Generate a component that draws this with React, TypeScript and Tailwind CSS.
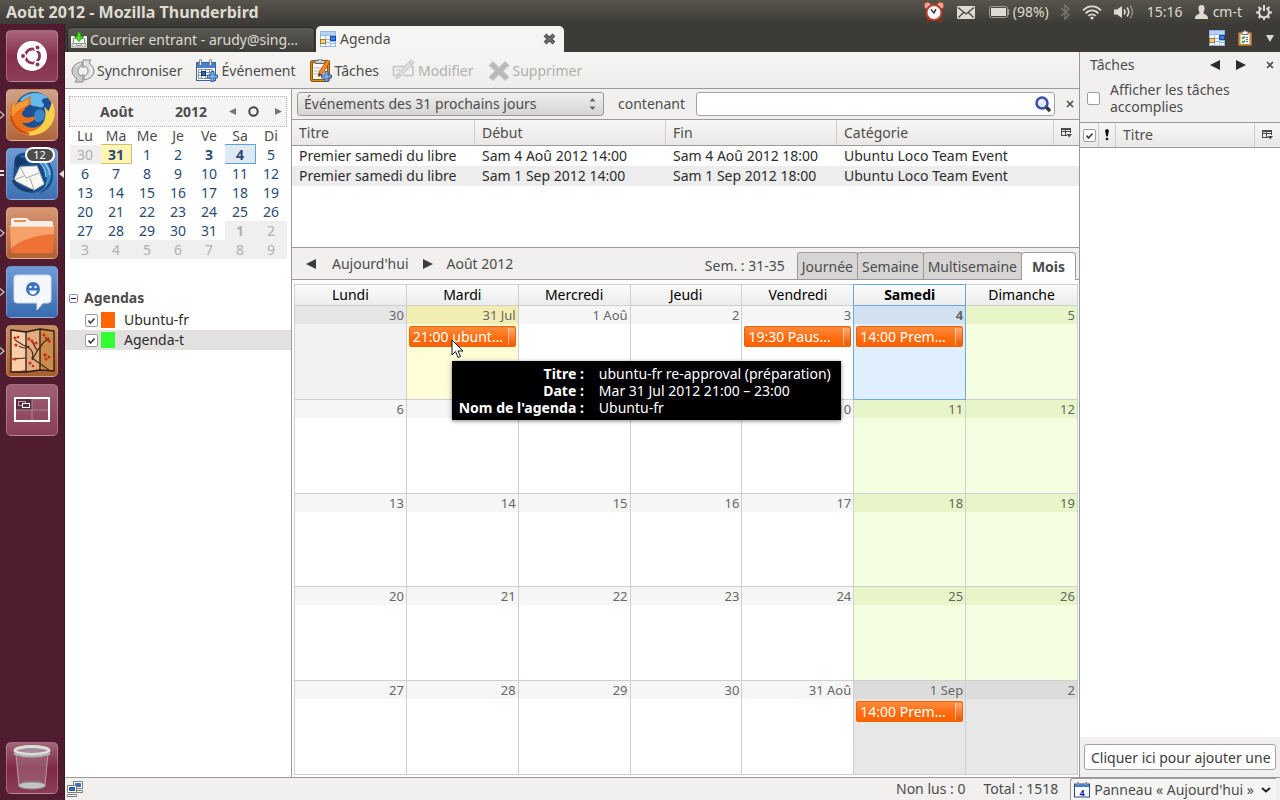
import type { ReactNode } from 'react';
import { clsx } from 'clsx';

interface CalendarEvent {
  label: string;
}

interface DayCell {
  label: string;
  tone?: 'off' | 'selected' | 'today' | 'weekend' | 'offWeekend';
  event?: CalendarEvent;
  tooltip?: boolean;
}

const dayNames = ['Lundi', 'Mardi', 'Mercredi', 'Jeudi', 'Vendredi', 'Samedi', 'Dimanche'];

const weeks: DayCell[][] = [
  [
    { label: '30', tone: 'off' },
    { label: '31 Jul', tone: 'selected', event: { label: '21:00 ubunt…' }, tooltip: true },
    { label: '1 Aoû' },
    { label: '2' },
    { label: '3', event: { label: '19:30 Paus…' } },
    { label: '4', tone: 'today', event: { label: '14:00 Prem…' } },
    { label: '5', tone: 'weekend' },
  ],
  [
    { label: '6' },
    { label: '7' },
    { label: '8' },
    { label: '9' },
    { label: '10' },
    { label: '11', tone: 'weekend' },
    { label: '12', tone: 'weekend' },
  ],
  [
    { label: '13' },
    { label: '14' },
    { label: '15' },
    { label: '16' },
    { label: '17' },
    { label: '18', tone: 'weekend' },
    { label: '19', tone: 'weekend' },
  ],
  [
    { label: '20' },
    { label: '21' },
    { label: '22' },
    { label: '23' },
    { label: '24' },
    { label: '25', tone: 'weekend' },
    { label: '26', tone: 'weekend' },
  ],
  [
    { label: '27' },
    { label: '28' },
    { label: '29' },
    { label: '30' },
    { label: '31 Aoû' },
    { label: '1 Sep', tone: 'offWeekend', event: { label: '14:00 Prem…' } },
    { label: '2', tone: 'offWeekend' },
  ],
];

const headTone = {
  normal: 'bg-[#f6f6f6]',
  off: 'bg-[#e6e6e6]',
  selected: 'bg-[#f2edb2]',
  today: 'bg-[#d1e1f2] font-bold',
  weekend: 'bg-[#e8f5c9]',
  offWeekend: 'bg-[#dcdcdc]',
};

const bodyTone = {
  normal: 'bg-white',
  off: 'bg-[#f2f2f2]',
  selected: 'bg-[#fffcd8]',
  today: 'bg-[#e0effd]',
  weekend: 'bg-[#f4fee0]',
  offWeekend: 'bg-[#e7e7e7]',
};

const miniWeeks = [
  [30, 31, 1, 2, 3, 4, 5],
  [6, 7, 8, 9, 10, 11, 12],
  [13, 14, 15, 16, 17, 18, 19],
  [20, 21, 22, 23, 24, 25, 26],
  [27, 28, 29, 30, 31, 1, 2],
  [3, 4, 5, 6, 7, 8, 9],
];

const agendaRows = [
  ['Premier samedi du libre', 'Sam 4 Aoû 2012 14:00', 'Sam 4 Aoû 2012 18:00', 'Ubuntu Loco Team Event'],
  ['Premier samedi du libre', 'Sam 1 Sep 2012 14:00', 'Sam 1 Sep 2012 18:00', 'Ubuntu Loco Team Event'],
];

/* ---------- icons ---------- */

function Triangle({ dir, size = 10, color = '#3c3c3c' }: { dir: 'left' | 'right' | 'down'; size?: number; color?: string }) {
  const d = { left: 'M10 0v10L0 5z', right: 'M0 0v10l10-5z', down: 'M1 2h8L5 9z' }[dir];
  return (
    <svg width={size} height={size} viewBox="0 0 10 10">
      <path d={d} fill={color} />
    </svg>
  );
}

function CloseIcon() {
  return (
    <svg width="8" height="8" viewBox="0 0 8 8">
      <path d="M1 1l6 6M7 1L1 7" stroke="#4c4c4c" strokeWidth="1.600" />
    </svg>
  );
}

function ColumnPicker() {
  return (
    <svg width="11" height="10" viewBox="0 0 11 10">
      <path d="M0 0h10v5H9V4H5v3h1v1H0zM1 2v1h3V2zM5 2v1h4V2zM1 4v3h3V4z" fill="#4c4c4c" fillRule="evenodd" />
      <path d="M5.500 6h5.500L8.200 9.500z" fill="#4c4c4c" />
    </svg>
  );
}

function CalendarTabIcon() {
  return (
    <svg width="16" height="16" viewBox="0 0 16 16">
      <rect width="16" height="16" fill="#8fb4e6" />
      <path d="M1 1h14v3H1z" fill="#b9d3f5" />
      <path d="M1 5h4v3H1zM6 5h4v3H6zM11 5h4v3h-4zM6 9h4v2H6zM11 11h4v1h-4zM1 13h4v2H1zM6 12h4v3H6zM11 13h4v2h-4z" fill="#f4f8ff" />
      <path d="M5.500 1v14M10.500 1v14" stroke="#a9c6ee" />
      <rect x="10.500" y="5.500" width="5" height="4" fill="#3b7ae0" stroke="#174a9f" />
      <rect x="0.500" y="8.500" width="5" height="4" fill="#f3cf78" stroke="#a77b24" />
    </svg>
  );
}

function TaskTabIcon() {
  return (
    <svg width="14" height="16" viewBox="0 0 14 16">
      <rect x=".5" y="2.500" width="13" height="13" rx="1" fill="#c98d45" stroke="#a06c30" />
      <path d="M2.500 4h9v10h-9z" fill="#f4f8f8" />
      <path d="M4 1.500h2a1 1 0 0 1 2 0h2v3H4z" fill="#eee" stroke="#777" />
      <path d="M4 7.500l1 1 2-2M4 11.500l1 1 2-2" stroke="#2c9a3a" fill="none" strokeWidth="1.300" />
      <path d="M8 7.500h2M8 9.500h2M8 11.500h2" stroke="#666" />
    </svg>
  );
}

function InboxIcon() {
  return (
    <svg width="16" height="16" viewBox="0 0 16 16">
      <path d="M.5 4.500h15v11H.5z" fill="#e9e9e4" stroke="#fafaf5" />
      <path d="M2.500 6.500h11v5h-11z" fill="#fff" stroke="#8f8f8a" />
      <path d="M1 11.500h4l1 2h4l1-2h4V15H1z" fill="#deded8" stroke="#9a9a94" />
      <path d="M6.500.5h3v4h3L8 9.500 3.500 4.500h3z" fill="#54d82e" stroke="#219a16" />
    </svg>
  );
}

function SyncIcon() {
  return (
    <svg width="24" height="24" viewBox="0 0 24 24">
      <path d="M11 3v4c-3 1-4 3-4 5s1 4 3 5l2-2v8H4l2-3C3 18 1 15 1 12c0-5 5-8.500 10-9z" fill="#c9cccd" stroke="#85898b" />
      <path d="M13 21v-4c3-1 4-3 4-5s-1-4-3-5l-2 2V1h8l-2 3c3 2 5 5 5 8 0 5-5 8.500-10 9z" fill="#e1e3e3" stroke="#85898b" />
      <path d="M5 8c1-2 3-3 5-4M20 9c2 4-1 8-5 10" stroke="#fff" fill="none" opacity=".8" />
    </svg>
  );
}

function PlusBadge({ x, y }: { x: number; y: number }) {
  return (
    <path
      d="M4 .5h3V4h3.500v3H7v3.500H4V7H.5V4H4z"
      transform={`translate(${x} ${y})`}
      fill="#7fa9de"
      stroke="#2c5f9f"
    />
  );
}

function NewEventIcon() {
  return (
    <svg width="24" height="24" viewBox="0 0 24 24">
      <rect x="1.500" y="3.500" width="19" height="18" fill="#fff" stroke="#3465a4" />
      <path d="M2 4h18v5H2z" fill="#4a80c9" />
      <path d="M3.500 10.500h14v9h-14zM3.500 13.500h14M3.500 16.500h14M6.500 10.500v9M10.500 10.500v9M14.500 10.500v9" fill="none" stroke="#8a93a0" />
      <rect x="6.500" y="12.500" width="4" height="4" fill="#2f66b3" stroke="#153a73" />
      <path d="M5.500 1.500v4M15.500 1.500v4" stroke="#888" strokeWidth="3" strokeLinecap="round" />
      <path d="M5.500 1.500v4M15.500 1.500v4" stroke="#eee" strokeWidth="1" strokeLinecap="round" />
      <PlusBadge x={12} y={12} />
    </svg>
  );
}

function NewTaskIcon() {
  return (
    <svg width="24" height="24" viewBox="0 0 24 24">
      <rect x="2.500" y="2.500" width="17" height="19" rx="1.500" fill="#f7f7f5" stroke="#8f5902" strokeWidth="3" />
      <rect x="2.500" y="2.500" width="17" height="19" rx="1.500" fill="none" stroke="#d98b1f" />
      <path d="M6 4.500h10v-3h-3a2 2 0 0 0-4 0H6z" fill="#ccc" stroke="#666" />
      <path d="M5 9h8M5 12h6M5 15h4" stroke="#bbb" />
      <path d="M18 1l3 1.500-8 13-3.500 2 .5-4z" fill="#f28a2c" stroke="#b8560b" />
      <path d="M10 14l2.500 1.500L9.500 17.500z" fill="#444" />
      <PlusBadge x={12} y={12} />
    </svg>
  );
}

function EditIcon() {
  return (
    <svg width="24" height="24" viewBox="0 0 24 24" fill="none" stroke="#c4c4c2">
      <path d="M1.500 7.500h14M1.500 7.500v9h3M12 16.500h9v-9h-2" strokeWidth="1.500" />
      <path d="M19 1l3 2.500L9 17l-5 3 1.500-5z" fill="#dededc" />
      <path d="M5.500 15L9 17M17 3.500L20 6" />
      <path d="M4 12l3-2 1 2" />
    </svg>
  );
}

function DeleteIcon() {
  return (
    <svg width="24" height="22" viewBox="0 0 24 22">
      <path d="M6 1.500l6 6 6-6 4 4-6 5.500 6 6-4 3.500-6-6-6 6L2 17l6-6-6-5.500z" fill="#b9b9b7" stroke="#c9c9c7" />
    </svg>
  );
}

function SearchIcon() {
  return (
    <svg width="16" height="16" viewBox="0 0 16 16">
      <path d="M10.500 10.500l3.500 3.500" stroke="#333" strokeWidth="3.500" strokeLinecap="round" />
      <circle cx="7" cy="7" r="5.500" fill="#dfe7fb" stroke="#3a4fa3" strokeWidth="2.500" />
      <path d="M4.500 6.500A3 3 0 0 1 7 4.500" stroke="#fff" strokeWidth="1.500" fill="none" />
    </svg>
  );
}

function NetworkIcon() {
  return (
    <svg width="16" height="16" viewBox="0 0 16 16" stroke="#7d7f7a">
      <path d="M6.500.5h9v7h-9zM7.500 9.500h8v2h-8z" fill="#fff" />
      <path d="M8.500 2.500h5v3h-5z" fill="#3f6fc4" stroke="#3a69b8" />
      <path d="M.5 4.500h9v7h-9zM.5 13.500h9v2h-9z" fill="#fff" />
      <path d="M2.500 6.500h5v3h-5z" fill="#3f6fc4" stroke="#1f4b99" />
    </svg>
  );
}

/* ---------- top panel ---------- */

function AlarmIcon() {
  return (
    <svg width="22" height="22" viewBox="0 0 22 22">
      <path d="M6 17l-1 3M16 17l1 3" stroke="#8e2b1c" strokeWidth="3" strokeLinecap="round" />
      <circle cx="4.500" cy="4.500" r="3.500" fill="#e9a597" stroke="#a5402f" />
      <circle cx="17.500" cy="4.500" r="3.500" fill="#e9a597" stroke="#a5402f" />
      <circle cx="11" cy="11.500" r="7.500" fill="#fbfbfb" stroke="#b8412e" strokeWidth="2" />
      <path d="M8 8.500l3 3.500 2-4" stroke="#333" strokeWidth="1.500" fill="none" />
    </svg>
  );
}

function TopPanel() {
  return (
    <header className="h-6 shrink-0 flex items-center justify-between pl-[6px] pr-2 bg-linear-to-b from-[#57554b] to-[#3d3b37] text-[#dfdbd2]">
      <h1 className="text-base leading-6 font-bold">Août 2012 - Mozilla Thunderbird</h1>
      <div className="flex items-center text-sm leading-6">
        <AlarmIcon />
        <svg width="18" height="13" viewBox="0 0 18 13" className="ml-3">
          <rect width="18" height="13" rx="1" fill="#dfdbd2" />
          <path d="M1 1.500l8 6.500 8-6.500M1.500 11.500l5-5M16.500 11.500l-5-5" stroke="#45433d" strokeWidth="1.300" fill="none" />
        </svg>
        <svg width="21" height="12" viewBox="0 0 21 12" className="ml-[14px]">
          <rect x=".5" y=".5" width="18" height="11" rx="2" fill="none" stroke="#a09d95" />
          <rect x="2" y="2" width="15" height="8" fill="#dfdbd2" />
          <path d="M19.500 3v6" stroke="#a09d95" strokeWidth="1.500" />
        </svg>
        <span className="ml-[3px]">(98%)</span>
        <svg width="10" height="16" viewBox="0 0 10 16" className="ml-[11px]" fill="none" stroke="#7b7972" strokeWidth="1.300">
          <path d="M1 4l8 7-4 4V1l4 4-8 7" />
        </svg>
        <svg width="20" height="15" viewBox="0 0 20 15" className="ml-3" fill="none" stroke="#dfdbd2" strokeWidth="1.800">
          <path d="M1 5.500C6 0 14 0 19 5.500M3.700 8.300c3.600-4 9-4 12.600 0M6.400 11c2-2.300 5.200-2.300 7.200 0" />
          <path d="M8 12.500c1-1 3-1 4 0L10 15z" fill="#dfdbd2" stroke="none" />
        </svg>
        <svg width="20" height="14" viewBox="0 0 20 14" className="ml-3" fill="none" stroke="#dfdbd2" strokeWidth="1.600">
          <path d="M0 4.500h3L8 1v12L3 9.500H0z" fill="#dfdbd2" stroke="none" />
          <path d="M10 4.500q2 2.500 0 5M13 2.500q3.500 4.500 0 9" />
          <path d="M16 .8q5 6.200 0 12.400" stroke="#8a8880" />
        </svg>
        <span className="ml-[13px]">15:16</span>
        <svg width="13" height="14" viewBox="0 0 13 14" className="ml-3">
          <path d="M6.500 0C9 0 10 2 9.500 4.500 9.300 6 8.500 7 8.500 8c0 1.500 4.500 1.500 4.500 5v1H0v-1c0-3.500 4.500-3.500 4.500-5 0-1-.8-2-1-3.500C3 2 4 0 6.500 0z" fill="#dfdbd2" />
        </svg>
        <span className="ml-[5px]">cm-t</span>
        <svg width="16" height="16" viewBox="0 0 16 16" className="ml-[14px]" fill="none" stroke="#dfdbd2" strokeWidth="2">
          <path d="M5.500 4.200A5 5 0 1 0 10.500 4.200" />
          <path d="M8 1v6" />
          <path d="M2.500 3l2 2M0 8.500h3M2.500 14l2-2M8 13v3M13.500 14l-2-2M16 8.500h-3M13.500 3l-2 2" />
        </svg>
      </div>
    </header>
  );
}

/* ---------- launcher ---------- */

function LauncherTile({ label, tint, arrow, focused, children }: {
  label: string;
  tint: string;
  arrow?: boolean;
  focused?: boolean;
  children: ReactNode;
}) {
  return (
    <div className="relative">
      {arrow && (
        <svg width="5" height="8" viewBox="0 0 5 8" className="absolute -left-[6px] top-[22px]">
          <path d="M0 .5L4 4 0 7.500" fill="none" stroke="#cfc3c9" strokeWidth="1.300" />
        </svg>
      )}
      {focused && (
        <>
          <svg width="5" height="7" viewBox="0 0 5 7" className="absolute -left-[6px] top-[22px]">
            <path d="M0 1h4M0 5h4" stroke="#e5dde1" strokeWidth="2" />
          </svg>
          <svg width="5" height="8" viewBox="0 0 5 8" className="absolute -right-[6px] top-[22px]">
            <path d="M5 0v8L0 4z" fill="#e5dde1" />
          </svg>
        </>
      )}
      <button
        type="button"
        aria-label={label}
        className={clsx('block w-[52px] h-[52px] rounded-[5px] border border-white/25 overflow-hidden bg-linear-to-b', tint)}
      >
        {children}
      </button>
    </div>
  );
}

function Launcher() {
  return (
    <nav className="w-[65px] shrink-0 flex flex-col items-center gap-[7px] py-[6px] pr-px bg-[#4f1c30] border-r border-[#3a1424]">
      <LauncherTile label="Tableau de bord" tint="from-[#a8657c] via-[#84304c] to-[#8c3d58]">
        <svg viewBox="0 0 50 50">
          <circle cx="25" cy="25" r="15" fill="#fff" />
          <circle cx="25.500" cy="25" r="7" fill="none" stroke="#8a3a55" strokeWidth="3" />
          <g stroke="#fff" strokeWidth="1.600">
            <path d="M25.500 25H14M25.500 25l6-10M25.500 25l6 10" strokeWidth="1.500" />
            <circle cx="16" cy="25" r="2.800" fill="#8a3a55" />
            <circle cx="30.500" cy="16.500" r="2.800" fill="#8a3a55" />
            <circle cx="30.500" cy="33.500" r="2.800" fill="#8a3a55" />
          </g>
          <circle cx="25.500" cy="25" r="5.500" fill="#fff" />
        </svg>
      </LauncherTile>
      <LauncherTile label="Firefox" tint="from-[#cfa287] to-[#b0643a]" arrow>
        <svg viewBox="0 0 50 50">
          <circle cx="27" cy="21" r="19" fill="#1c4f94" />
          <path d="M13 10C19 2 34 0 41 8c-5 0-8 2-5 5 3 2-1 6-4 4-3-1-7 0-9-3-2-2-6-1-10-4z" fill="#64b8ea" />
          <path d="M30 20c4-2 8 1 8 5s-4 8-8 7-4-9 0-12z" fill="#3a86c9" />
          <path d="M45 12c6 14-1 30-17 33C14 47 3 38 3 24c0-5 1-9 3-13l2 5c2-4 5-5 8-5 2-1 5-4 8-5-1 3-1 5 0 8l-6 4c0 3-3 3-3 6 1 4 6 4 9 3 4-1 6 1 3 3-5 4-9 3-12 3 5 6 14 6 20 1 5-4 6-9 5-14 2 1 3 3 3 5 1-4 2-9 2-13z" fill="#ea701a" />
          <path d="M45 12c7 14 0 30-17 33-6 1-10 0-14-3 11 1 20-3 23-11 2-5 2-9 0-14 2 1 4 3 4 5 2-3 3-7 4-10z" fill="#fad04a" />
          <path d="M6 12l2 5c2-4 5-5 8-5 2-1 4-3 6-4-1 3 0 5 0 6l-6 4c-4 1-8 4-10 9-2-5-1-10 0-15z" fill="#f39a3c" />
          <path d="M4 26c1 9 8 16 18 18" stroke="#c94812" strokeWidth="2" fill="none" />
        </svg>
      </LauncherTile>
      <div className="relative">
        <LauncherTile label="Thunderbird" tint="from-[#6f9ad2] to-[#3d70b4]" focused>
          <svg viewBox="0 0 50 50">
            <path d="M9 7c6-5 14-4 19 0 9 0 17 6 18 17 1 10-5 19-14 20 3-2 5-4 6-7-4 6-11 8-17 6C12 42 6 37 6 29c1-4 0-7 1-11 0-4 0-7 2-11z" fill="#1b4c87" />
            <path d="M12 9c8-5 17-2 22 4 7 8 8 18 2 28 7-6 10-14 7-22C40 11 31 6 21 7z" fill="#3f93cf" />
            <path d="M22 9c10 1 17 9 17 19M30 9c7 2 12 9 13 17" stroke="#8cc9ee" strokeWidth="1.500" fill="none" />
            <path d="M13 18l17-1 7 18-10 6L7 31z" fill="#f7f7f3" stroke="#c9c9c4" />
            <path d="M13 18l6 11 13-5M7 31l10-4M27 41l-4-12" fill="none" stroke="#a9a9a4" />
            <path d="M9 8c5-1 9 2 11 7-4-1-7 1-10 4-2-4-3-7-1-11z" fill="#123a6d" />
            <path d="M6 31c4 8 11 11 20 11" stroke="#1b3f70" strokeWidth="3" fill="none" />
          </svg>
        </LauncherTile>
        <span className="absolute -top-px left-[19px] w-[30px] h-[16px] rounded-full border-2 border-white bg-[#4d4d4d] text-white text-[11px] leading-3 text-center">
          12
        </span>
      </div>
      <LauncherTile label="Dossier personnel" tint="from-[#d79673] to-[#b4602f]" arrow>
        <svg viewBox="0 0 50 50">
          <path d="M4 12q0-2 2-2h14l3 3h21q2 0 2 2v5H4z" fill="#f5efe9" />
          <path d="M7 12h12v2H7z" fill="#ef8b4c" />
          <path d="M3 18h44l-1 24q0 3-3 3H7q-3 0-3-3z" fill="#ee7236" />
          <path d="M3 18h44v8C28 27 14 32 4 40z" fill="#f6a16a" />
          <path d="M3 18.500h44" stroke="#fcd5b8" />
        </svg>
      </LauncherTile>
      <LauncherTile label="Messagerie" tint="from-[#6f9ad6] to-[#386bb0]" arrow>
        <svg viewBox="0 0 50 50">
          <path d="M10 8h31q3 0 3 3v22q0 3-3 3h-5l-6 7v-7H10q-3 0-3-3V11q0-3 3-3z" fill="#f4f7fb" stroke="#cdd9ea" />
          <circle cx="26" cy="22" r="7" fill="#3b73c0" />
          <circle cx="23.500" cy="20" r="1.200" fill="#fff" />
          <circle cx="28.500" cy="20" r="1.200" fill="#fff" />
          <path d="M22 23.500h8q-1 4-4 4t-4-4z" fill="#fff" />
        </svg>
      </LauncherTile>
      <LauncherTile label="Paravent" tint="from-[#c98a62] to-[#a95e2c]" arrow>
        <svg viewBox="0 0 50 50">
          <path d="M4 4l15 2v38L4 46z" fill="#fbcda6" />
          <path d="M19 6l14-3v41l-14 2z" fill="#e2ab80" />
          <path d="M33 3l14 2v40l-14-1z" fill="#c98d4c" />
          <path d="M4 4l15 2 14-3 14 2v40l-14-1-14 2-15 0zM19 6v40M33 3v41" fill="none" stroke="#2a1a10" strokeWidth="1.300" />
          <path d="M5 33l14-1M42 44L25 32q3-6-4-11l-5-2-8-5M25 34q5-10 12-18l5-4M22 20q-4 4-10 0M30 24q-4-6-5-10" fill="none" stroke="#4a2a1c" strokeWidth="1.200" />
          <g fill="#cf2b20">
            <circle cx="8" cy="12" r="1.600" /><circle cx="11" cy="11" r="1.300" /><circle cx="9" cy="19" r="1.600" />
            <circle cx="22" cy="13" r="1.600" /><circle cx="25" cy="15" r="1.500" /><circle cx="29" cy="17" r="1.600" />
            <circle cx="37" cy="9" r="1.600" /><circle cx="42" cy="15" r="1.800" /><circle cx="39" cy="12" r="1.300" />
            <circle cx="38" cy="29" r="1.800" /><circle cx="42" cy="31" r="1.600" /><circle cx="39" cy="33" r="1.500" />
            <circle cx="23" cy="37" r="1.500" /><circle cx="26" cy="40" r="1.300" /><circle cx="8" cy="33" r="1.600" />
          </g>
        </svg>
      </LauncherTile>
      <LauncherTile label="Espaces de travail" tint="from-[#9f6076] to-[#8a3d57]">
        <svg viewBox="0 0 50 50" fill="none">
          <path d="M8 13h17v12H8z" fill="#5f2a3f" />
          <path d="M25 12v24M8 25h34" stroke="#98918c" />
          <rect x="8" y="13" width="34" height="23" stroke="#fff" strokeWidth="2" />
          <rect x="11.500" y="16.500" width="7" height="4" stroke="#aaa" />
          <rect x="15.500" y="18.500" width="7" height="4" fill="#5f2a3f" stroke="#fff" />
        </svg>
      </LauncherTile>
      <div className="mt-auto">
        <LauncherTile label="Corbeille" tint="from-[#a3637a] via-[#7d2745] to-[#8c3d58]">
          <svg viewBox="0 0 50 50">
            <path d="M8 8h34l-4 34q-13 7-27 0z" fill="#a8798a" opacity=".5" />
            <path d="M9 10l3 32M41 10l-3 32" stroke="#b993a0" />
            <ellipse cx="25" cy="42.500" rx="13.500" ry="3.500" fill="#c4c4c2" stroke="#909090" />
            <ellipse cx="25" cy="7.500" rx="17" ry="4" fill="#a3899a" stroke="#deded9" strokeWidth="3" />
            <path d="M8 9v2q17 5 34 0V9" stroke="#b4b4b0" strokeWidth="2" fill="none" />
          </svg>
        </LauncherTile>
      </div>
    </nav>
  );
}

/* ---------- thunderbird window ---------- */

function TabStrip() {
  return (
    <div className="h-7 shrink-0 flex items-end justify-between bg-[#3c3b37] pr-[5px]">
      <div className="flex items-end gap-px pl-[2px]">
        <button type="button" className="flex items-center gap-[3px] w-[248px] h-[25px] px-[3px] rounded-t-[5px] border border-b-0 border-[#2b2a27] bg-linear-to-b from-[#5a5953] to-[#403f3b] text-[#dfdbd2] whitespace-nowrap">
          <InboxIcon />
          Courrier entrant - arudy@sing…
        </button>
        <div className="flex items-center w-[248px] h-[26px] pl-1 pr-2 rounded-t-[5px] bg-[#f6f5f4]">
          <button type="button" className="flex items-center gap-1 flex-1">
            <CalendarTabIcon />
            Agenda
          </button>
          <button type="button" aria-label="Fermer l'onglet">
            <svg width="13" height="12" viewBox="0 0 13 12">
              <path d="M2 2l9 8M11 2l-9 8" stroke="#4c4c4c" strokeWidth="4" />
              <path d="M2 2l9 8M11 2l-9 8" stroke="#77777a" strokeWidth="1.500" />
            </svg>
          </button>
        </div>
      </div>
      <div className="flex items-center gap-[13px] h-7">
        <button type="button" aria-label="Agenda"><CalendarTabIcon /></button>
        <button type="button" aria-label="Tâches"><TaskTabIcon /></button>
        <button type="button" aria-label="Lister les onglets"><Triangle dir="down" color="#dfdbd2" /></button>
      </div>
    </div>
  );
}

function ToolButton({ icon, disabled, children }: { icon: ReactNode; disabled?: boolean; children: ReactNode }) {
  return (
    <button type="button" disabled={disabled} className={clsx('flex items-center gap-[2px]', disabled && 'text-[#b0afad]')}>
      {icon}
      {children}
    </button>
  );
}

function Toolbar() {
  return (
    <div className="h-[37px] shrink-0 flex items-center gap-[13px] pl-[6px] pt-px border-b border-[#9c9a98] bg-linear-to-b from-[#f6f5f4] to-[#efedec]">
      <ToolButton icon={<SyncIcon />}>Synchroniser</ToolButton>
      <ToolButton icon={<NewEventIcon />}>Événement</ToolButton>
      <ToolButton icon={<NewTaskIcon />}>Tâches</ToolButton>
      <ToolButton icon={<EditIcon />} disabled>Modifier</ToolButton>
      <ToolButton icon={<DeleteIcon />} disabled>Supprimer</ToolButton>
    </div>
  );
}

function MiniMonth() {
  return (
    <div className="mx-1 mt-[7px]">
      <div className="flex items-center h-[31px] border border-dotted border-[#b0b0b0] bg-[#f4f4f4] font-bold pr-1">
        <span className="flex-1 pl-[30px]">Août</span>
        <span className="w-[54px]">2012</span>
        <button type="button" aria-label="Mois précédent" className="pr-3"><Triangle dir="left" size={7} color="#777" /></button>
        <button type="button" aria-label="Aujourd'hui" className="pr-4">
          <svg width="11" height="11" viewBox="0 0 11 11"><circle cx="5.500" cy="5.500" r="4.200" fill="none" stroke="#444" strokeWidth="2" /></svg>
        </button>
        <button type="button" aria-label="Mois suivant"><Triangle dir="right" size={7} color="#777" /></button>
      </div>
      <table className="w-full table-fixed text-center leading-[17px]">
        <thead>
          <tr>
            {['Lu', 'Ma', 'Me', 'Je', 'Ve', 'Sa', 'Di'].map((d) => (
              <th key={d} className="font-normal p-0 h-4">{d}</th>
            ))}
          </tr>
        </thead>
        <tbody className="text-[#2a4a75]">
          {miniWeeks.map((week, w) => (
            <tr key={w}>
              {week.map((day, d) => {
                const outside = (w === 0 && d === 0) || (w === 4 && d > 4) || w === 5;
                return (
                  <td
                    key={d}
                    className={clsx(
                      'h-[19px] p-0 border',
                      outside && 'bg-[#efefef] text-[#b0b0b0]',
                      w === 0 && d === 1 && 'border-[#d5be6c] bg-[#fdf5b4]',
                      w === 0 && d === 5 && 'border-[#5fa4d8] bg-[#dfe9f4]',
                      !(w === 0 && (d === 1 || d === 5)) && 'border-transparent',
                      ((w === 0 && (d === 1 || d === 4 || d === 5)) || (w === 4 && d === 5)) && 'font-bold'
                    )}
                  >
                    {day}
                  </td>
                );
              })}
            </tr>
          ))}
        </tbody>
      </table>
    </div>
  );
}

function CheckBox({ id, checked }: { id: string; checked?: boolean }) {
  return (
    <span className="relative flex w-[13px] h-[13px] shrink-0">
      <input
        id={id}
        type="checkbox"
        defaultChecked={checked}
        className="peer appearance-none w-[13px] h-[13px] rounded-[2px] border border-[#9f9d9b] bg-white"
      />
      <svg viewBox="0 0 13 13" className="absolute inset-0 hidden peer-checked:block pointer-events-none">
        <path d="M3.500 6.500l2 2.500 4-4.500" fill="none" stroke="#3c3c3c" strokeWidth="1.600" />
      </svg>
    </span>
  );
}

function Sidebar() {
  return (
    <aside className="w-[227px] shrink-0 border-r border-[#9c9a98] bg-white">
      <MiniMonth />
      <div className="mt-[27px]">
        <div className="flex items-center gap-[6px] h-6 pl-1 font-bold">
          <button type="button" aria-label="Réduire">
            <svg width="9" height="9" viewBox="0 0 9 9">
              <rect x=".5" y=".5" width="8" height="8" rx="1" fill="#fafaff" stroke="#8585c9" />
              <path d="M2 4.500h5" stroke="#222" />
            </svg>
          </button>
          Agendas
        </div>
        <div className="flex items-center h-5 pl-5 gap-[3px] text-[#2c2c2c]">
          <CheckBox id="cal-ubuntu" checked />
          <span className="w-[14px] h-4 bg-[#ff6600]" />
          <label htmlFor="cal-ubuntu" className="pl-[6px]">Ubuntu-fr</label>
        </div>
        <div className="flex items-center h-5 pl-5 gap-[3px] bg-[#e3e1df] text-[#2c2c2c]">
          <CheckBox id="cal-agenda" checked />
          <span className="w-[14px] h-4 bg-[#33ff33]" />
          <label htmlFor="cal-agenda" className="pl-[6px]">Agenda-t</label>
        </div>
      </div>
    </aside>
  );
}

function FilterBar() {
  return (
    <div className="h-[30px] shrink-0 flex items-center pl-[5px] pr-[5px] bg-[#f1f0ef]">
      <div className="relative w-[307px] h-6">
        <select
          aria-label="Période"
          className="appearance-none w-full h-6 pl-[6px] rounded-[3px] border border-[#9b9997] bg-linear-to-b from-[#f0efee] to-[#d6d5d3]"
        >
          <option>Événements des 31 prochains jours</option>
        </select>
        <svg width="7" height="12" viewBox="0 0 7 12" className="absolute right-2 top-[6px] pointer-events-none">
          <path d="M.5 3.500h6L3.500 0zM.5 8.500h6l-3 3.500z" fill="#666" />
        </svg>
      </div>
      <label htmlFor="search" className="ml-[14px]">contenant</label>
      <div className="relative flex-1 ml-[11px] h-6">
        <input id="search" type="text" className="w-full h-6 px-2 pr-7 rounded-[3px] border border-[#a5a3a1] bg-white" />
        <span className="absolute right-1 top-1"><SearchIcon /></span>
      </div>
      <button type="button" aria-label="Fermer" className="ml-[11px]"><CloseIcon /></button>
    </div>
  );
}

function AgendaList() {
  const th = 'h-[26px] p-0 pl-[7px] text-left font-normal border-r border-[#cfcdcb]';
  return (
    <div className="h-[128px] shrink-0 border-t border-[#9c9a98] bg-white">
      <table className="w-full table-fixed border-separate border-spacing-0">
        <thead className="bg-linear-to-b from-[#f8f7f7] to-[#e9e8e6]">
          <tr className="*:border-b *:border-b-[#9c9a98]">
            <th className={clsx(th, 'w-[183px]')}>Titre</th>
            <th className={clsx(th, 'w-[191px]')}>Début</th>
            <th className={clsx(th, 'w-[171px]')}>Fin</th>
            <th className={th}>Catégorie</th>
            <th className="w-[25px] p-0">
              <button type="button" aria-label="Colonnes" className="flex mx-auto"><ColumnPicker /></button>
            </th>
          </tr>
        </thead>
        <tbody className="text-[#2c2c2c]">
          {agendaRows.map((row, i) => (
            <tr key={i} className="even:bg-[#ededed]">
              {row.map((cell, j) => (
                <td key={j} className="h-5 p-0 pl-[7px] leading-5 whitespace-nowrap">{cell}</td>
              ))}
              <td />
            </tr>
          ))}
        </tbody>
      </table>
    </div>
  );
}

function ViewBar() {
  return (
    <div className="h-[33px] shrink-0 flex items-end justify-between pl-[14px] pr-[3px] border-t border-b border-[#9c9a98] bg-[#f1f0ef]">
      <div className="flex items-center h-[30px]">
        <button type="button" aria-label="Précédent"><Triangle dir="left" /></button>
        <button type="button" className="ml-4 mr-[14px]">Aujourd'hui</button>
        <button type="button" aria-label="Suivant"><Triangle dir="right" /></button>
        <span className="ml-[14px]">Août 2012</span>
      </div>
      <div className="flex items-end">
        <span className="mr-3 self-center">Sem. : 31-35</span>
        {['Journée', 'Semaine', 'Multisemaine'].map((view) => (
          <button key={view} type="button" className="h-[27px] px-1 pt-px -mr-px rounded-t-[3px] border border-b-0 border-[#9c9a98] bg-[#d6d5d4]">
            {view}
          </button>
        ))}
        <button type="button" className="h-7 w-[55px] -mb-px rounded-t-[4px] border border-b-0 border-[#9c9a98] bg-white font-bold">
          Mois
        </button>
      </div>
    </div>
  );
}

function EventTooltip() {
  return (
    <div role="tooltip" className="absolute z-20 left-[45px] top-[55px] grid grid-cols-[128px_auto] gap-x-[15px] w-[389px] p-1 bg-black text-white text-sm leading-[17px] text-left whitespace-nowrap shadow-[0_1px_4px_rgba(0,0,0,0.5)]">
      <b className="text-right">Titre :</b>
      <span>ubuntu-fr re-approval (préparation)</span>
      <b className="text-right">Date :</b>
      <span>Mar 31 Jul 2012 21:00 – 23:00</span>
      <b className="text-right">Nom de l'agenda :</b>
      <span>Ubuntu-fr</span>
    </div>
  );
}

function Cursor() {
  return (
    <svg width="13" height="20" viewBox="0 0 13 20" className="absolute z-30 left-11 top-[33px]">
      <path d="M1 1v15l3.500-3.500L7 18.500l2.500-1L7 12h5z" fill="#fff" stroke="#111" strokeLinejoin="round" />
    </svg>
  );
}

function EventBox({ event }: { event: CalendarEvent }) {
  return (
    <button
      type="button"
      className="relative flex items-center h-[21px] mx-[2px] mt-[2px] pl-[3px] w-[calc(100%-4px)] rounded-[2px] border border-[#f26300] bg-linear-to-b from-[#ff8b3d] via-[#ff6f0f] to-[#fb6200] text-white whitespace-nowrap"
    >
      {event.label}
      <span className="absolute right-0 top-[1px] w-[7px] h-[17px] border-l border-white/50 bg-linear-to-b from-white/30 to-[#d95500]/50" />
    </button>
  );
}

function MonthView() {
  return (
    <div className="flex-1 min-h-0 flex flex-col pt-1 pl-[2px] pr-px pb-[2px] bg-white">
      <table className="flex-1 flex flex-col border-l border-[#cfcfcf]">
        <thead className="block">
          <tr className="grid grid-cols-7">
            {dayNames.map((name, i) => (
              <th
                key={name}
                className={clsx(
                  'h-[22px] p-0 leading-5 text-black border-t border-r border-b bg-linear-to-b from-[#fbfbfb] to-[#ececec]',
                  i === 5 ? 'font-bold border-[#68a8dc]' : 'font-normal border-[#cfcfcf]',
                  i === 4 && 'border-r-[#68a8dc]'
                )}
              >
                {name}
              </th>
            ))}
          </tr>
        </thead>
        <tbody className="flex-1 flex flex-col">
          {weeks.map((week, w) => (
            <tr key={w} className="flex-1 grid grid-cols-7">
              {week.map((day, d) => (
                <td
                  key={d}
                  className={clsx(
                    'relative p-0 border-r border-b',
                    bodyTone[day.tone ?? 'normal'],
                    day.tone === 'today' ? 'border-[#6cacdf]' : 'border-[#cfcfcf]',
                    w === 0 && d === 4 && 'border-r-[#6cacdf]'
                  )}
                >
                  <div className={clsx('h-[18px] pr-[2px] text-right text-[13px] leading-[18px] text-[#666]', headTone[day.tone ?? 'normal'])}>
                    {day.label}
                  </div>
                  {day.event && <EventBox event={day.event} />}
                  {day.tooltip && <EventTooltip />}
                  {day.tooltip && <Cursor />}
                </td>
              ))}
            </tr>
          ))}
        </tbody>
      </table>
    </div>
  );
}

function TodayPane() {
  return (
    <aside className="w-[201px] shrink-0 flex flex-col border-l border-[#9c9a98] bg-white">
      <div className="h-[71px] shrink-0 bg-[#f1f0ef] border-b border-[#9c9a98]">
        <div className="flex items-center h-[26px] pl-[10px] pr-[6px]">
          <span className="flex-1">Tâches</span>
          <button type="button" aria-label="Précédent"><Triangle dir="left" color="#2c2c2c" /></button>
          <button type="button" aria-label="Suivant" className="ml-4 mr-5"><Triangle dir="right" color="#2c2c2c" /></button>
          <button type="button" aria-label="Fermer"><CloseIcon /></button>
        </div>
        <div className="flex items-center pt-[3px] pl-[7px] gap-[10px]">
          <CheckBox id="show-done" />
          <label htmlFor="show-done" className="leading-[17px] w-[150px]">Afficher les tâches accomplies</label>
        </div>
      </div>
      <div className="h-[25px] shrink-0 flex items-center border-b border-[#9c9a98] bg-linear-to-b from-[#f8f7f7] to-[#e9e8e6]">
        <span className="flex items-center h-full w-[19px] pl-[3px] border-r border-[#cfcdcb]"><CheckBox id="col-done" checked /></span>
        <span className="flex items-center justify-center h-full w-[17px] border-r border-[#cfcdcb]">
          <svg width="4" height="12" viewBox="0 0 4 12"><path d="M0 1.500q2-3 4 0L2.700 7.500H1.300z" fill="#111" /><circle cx="2" cy="10" r="1.300" fill="#111" /></svg>
        </span>
        <span className="flex-1 pl-[7px]">Titre</span>
        <button type="button" aria-label="Colonnes" className="flex items-center justify-center h-full w-[26px] border-l border-[#cfcdcb]"><ColumnPicker /></button>
      </div>
      <div className="flex-1" />
      <div className="h-10 shrink-0 px-1 pt-[7px] bg-[#f1f0ef]">
        <input
          type="text"
          aria-label="Nouvelle tâche"
          defaultValue="Cliquer ici pour ajouter une"
          className="w-full h-[26px] pl-[6px] rounded-[3px] border border-[#a5a3a1] bg-white text-[#3c3c3c]"
        />
      </div>
    </aside>
  );
}

function StatusBar() {
  return (
    <footer className="h-[23px] shrink-0 flex items-center border-t border-[#9c9a98] bg-[#f1f0ef] pl-[2px] pr-1">
      <NetworkIcon />
      <span className="ml-auto">Non lus : 0</span>
      <span className="ml-[18px]">Total : 1518</span>
      <button type="button" className="flex items-center h-[22px] ml-3 pl-[3px] pr-[5px] gap-1 rounded-tl-[3px] border-l border-t border-[#9c9a98] bg-[#f6f5f4] whitespace-nowrap">
        <svg width="16" height="17" viewBox="0 0 16 17">
          <rect x=".5" y="3" width="15" height="13" fill="#fff" stroke="#204a87" />
          <path d="M1 3h14v3H1z" fill="#4a80c9" />
          <path d="M4 1v3M12 1v3" stroke="#999" strokeWidth="2" />
          <text x="8" y="15" textAnchor="middle" fontSize="9" fontWeight="bold" fill="#1b1b9c">4</text>
        </svg>
        Panneau « Aujourd'hui »
        <svg width="10" height="6" viewBox="0 0 10 6" className="ml-[3px]"><path d="M1 1l4 3.500L9 1" fill="none" stroke="#222" strokeWidth="2" /></svg>
      </button>
    </footer>
  );
}

export default function App() {
  return (
    <div className="h-screen flex flex-col overflow-hidden text-sm leading-[18px] text-[#4c4c4c] font-['Noto_Sans','Open_Sans',sans-serif]">
      <TopPanel />
      <div className="flex-1 min-h-0 flex">
        <Launcher />
        <div className="flex-1 min-w-0 flex flex-col">
          <TabStrip />
          <div className="flex-1 min-h-0 flex">
            <main className="flex-1 min-w-0 flex flex-col">
              <Toolbar />
              <div className="flex-1 min-h-0 flex">
                <Sidebar />
                <section className="flex-1 min-w-0 flex flex-col">
                  <FilterBar />
                  <AgendaList />
                  <ViewBar />
                  <MonthView />
                </section>
              </div>
            </main>
            <TodayPane />
          </div>
          <StatusBar />
        </div>
      </div>
    </div>
  );
}
